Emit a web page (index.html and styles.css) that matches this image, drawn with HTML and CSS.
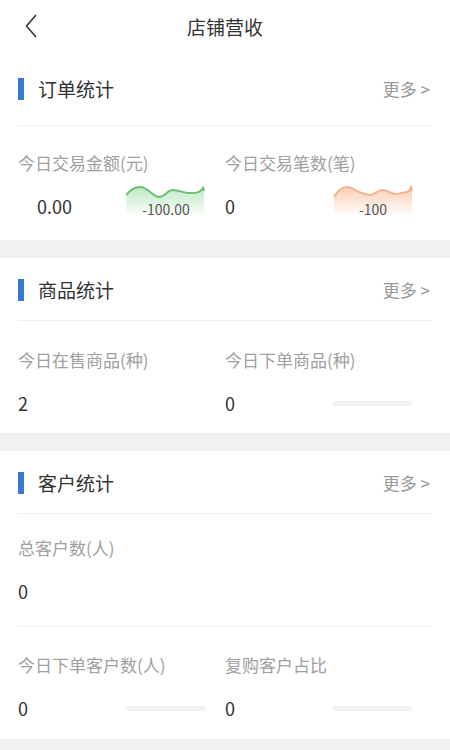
FILE: index.html
```html
<!DOCTYPE html>
<html lang="zh-CN">
<head>
    <meta charset="UTF-8">
    <meta name="viewport" content="width=device-width, initial-scale=1.0">
    <title>店铺营收</title>
    <link rel="stylesheet" href="styles.css">
</head>
<body>
    <div class="header">
        <svg class="back" width="12" height="24" viewBox="0 0 12 24">
            <polyline points="11,1 1.5,12 11,23" fill="none" stroke="#333" stroke-width="1.6"/>
        </svg>
        <div class="header-title">店铺营收</div>
    </div>

    <div class="section first">
        <div class="section-head">
            <div class="section-title">订单统计</div>
            <div class="more">更多 &gt;</div>
        </div>
        <div class="grid order-grid">
            <div class="stat">
                <div class="label">今日交易金额(元)</div>
                <div class="row chart-row">
                    <div class="value indent">0.00</div>
                    <div class="spark">
                        <svg width="80" height="32" viewBox="0 0 80 32">
                            <defs>
                                <linearGradient id="g1" x1="0" y1="0" x2="0" y2="1">
                                    <stop offset="0" stop-color="#bfe9c4"/>
                                    <stop offset="1" stop-color="#ffffff"/>
                                </linearGradient>
                            </defs>
                            <path d="M0,10 C5,4 9,2 14,2 C22,2 27,12 33,12 C39,12 41,5 47,5 C54,5 57,8 63,8 C70,8 74,8 77,3 L78,6 L78,32 L0,32 Z" fill="url(#g1)"/>
                            <path d="M0,10 C5,4 9,2 14,2 C22,2 27,12 33,12 C39,12 41,5 47,5 C54,5 57,8 63,8 C70,8 74,8 77,3 L78,6" fill="none" stroke="#6cc070" stroke-width="2"/>
                        </svg>
                        <span class="spark-num">-100.00</span>
                    </div>
                </div>
            </div>
            <div class="stat">
                <div class="label">今日交易笔数(笔)</div>
                <div class="row chart-row">
                    <div class="value">0</div>
                    <div class="spark">
                        <svg width="80" height="32" viewBox="0 0 80 32">
                            <defs>
                                <linearGradient id="g2" x1="0" y1="0" x2="0" y2="1">
                                    <stop offset="0" stop-color="#fbcfb4"/>
                                    <stop offset="1" stop-color="#ffffff"/>
                                </linearGradient>
                            </defs>
                            <path d="M1,12 C5,5 9,2 14,2 C20,2 24,7 29,8 C33,9 34,10 37,10 C42,10 44,5 49,5 C55,5 58,9 63,9 C68,9 70,7 74,7 C77,7 77,4 78,2 L79,6 L79,32 L1,32 Z" fill="url(#g2)"/>
                            <path d="M1,12 C5,5 9,2 14,2 C20,2 24,7 29,8 C33,9 34,10 37,10 C42,10 44,5 49,5 C55,5 58,9 63,9 C68,9 70,7 74,7 C77,7 77,4 78,2 L79,6" fill="none" stroke="#f2b48e" stroke-width="2"/>
                        </svg>
                        <span class="spark-num">-100</span>
                    </div>
                </div>
            </div>
        </div>
    </div>

    <div class="section">
        <div class="section-head">
            <div class="section-title">商品统计</div>
            <div class="more">更多 &gt;</div>
        </div>
        <div class="grid">
            <div class="stat">
                <div class="label">今日在售商品(种)</div>
                <div class="row">
                    <div class="value">2</div>
                </div>
            </div>
            <div class="stat">
                <div class="label">今日下单商品(种)</div>
                <div class="row">
                    <div class="value">0</div>
                    <div class="bar"></div>
                </div>
            </div>
        </div>
    </div>

    <div class="section last">
        <div class="section-head">
            <div class="section-title">客户统计</div>
            <div class="more">更多 &gt;</div>
        </div>
        <div class="grid total-grid">
            <div class="stat">
                <div class="label">总客户数(人)</div>
                <div class="row">
                    <div class="value">0</div>
                </div>
            </div>
        </div>
        <div class="grid buyer-grid">
            <div class="stat">
                <div class="label">今日下单客户数(人)</div>
                <div class="row">
                    <div class="value">0</div>
                    <div class="bar"></div>
                </div>
            </div>
            <div class="stat">
                <div class="label">复购客户占比</div>
                <div class="row">
                    <div class="value">0</div>
                    <div class="bar"></div>
                </div>
            </div>
        </div>
    </div>
</body>
</html>
```

FILE: styles.css
```css
body {
    margin: 0;
    padding: 0;
    background-color: #f0f1f3;
    font-family: "Noto Sans CJK SC", "Noto Sans", sans-serif;
    color: #333;
}
.header {
    height: 52px;
    background-color: #fff;
    display: flex;
    align-items: center;
    justify-content: center;
    position: relative;
}
.back {
    position: absolute;
    left: 25px;
    top: 14px;
}
.header-title {
    font-size: 19px;
    color: #333;
}
.section {
    background-color: #fff;
    padding: 0 18px;
    margin-bottom: 18px;
}
.section.first {
    padding-top: 5px;
}
.section.last {
    margin-bottom: 0;
}
.section-head {
    display: flex;
    align-items: center;
    justify-content: space-between;
    padding: 21px 0 19px;
}
.first .section-head {
    padding-bottom: 25px;
}
.section-title {
    font-size: 19px;
    color: #333;
    border-left: 6px solid #3a78d6;
    padding-left: 14px;
    line-height: 22px;
}
.more {
    font-size: 17px;
    line-height: 22px;
    color: #999;
    padding-right: 2px;
}
.grid {
    display: grid;
    grid-template-columns: 1fr 1fr;
    border-top: 1px solid #efefef;
    padding: 27px 0 18px;
}
.order-grid {
    padding: 25px 0 23px;
}
.total-grid {
    padding: 22px 0 23px;
}
.buyer-grid {
    padding: 26px 0 19px;
}
.label {
    font-size: 17px;
    line-height: 24px;
    color: #a0a0a0;
}
.row {
    display: flex;
    align-items: center;
    justify-content: space-between;
    margin-top: 19px;
    padding-right: 19px;
    height: 24px;
}
.chart-row {
    margin-top: 10px;
    height: 32px;
    align-items: flex-end;
}
.value {
    font-size: 18px;
    line-height: 22px;
    color: #333;
}
.value.indent {
    padding-left: 19px;
}
.spark {
    position: relative;
    width: 80px;
    height: 32px;
    display: flex;
    align-items: flex-end;
    justify-content: center;
}
.spark svg {
    position: absolute;
    left: 0;
    top: 0;
}
.spark-num {
    position: relative;
    font-size: 14px;
    line-height: 16px;
    color: #555;
}
.bar {
    width: 80px;
    height: 5px;
    border-radius: 3px;
    background-color: #f1f2f4;
}
```
